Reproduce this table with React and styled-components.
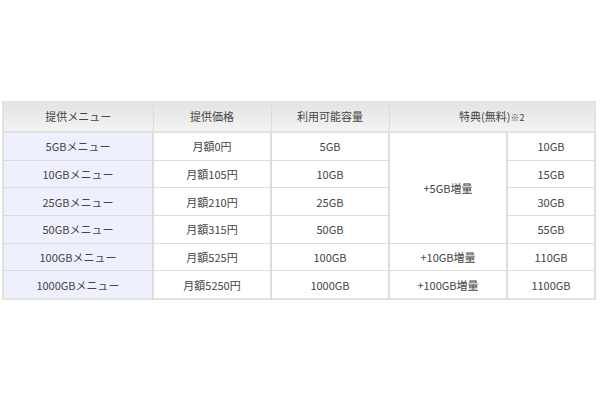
import React from "react";
import styled, { createGlobalStyle } from "styled-components";

const Global = createGlobalStyle`
  html, body { margin: 0; padding: 0; background: #ffffff; }
  body { width: 600px; height: 400px; overflow: hidden; }
`;

const Page = styled.div`
  padding: 101px 0 0 2px;
`;

const Table = styled.table`
  width: 594px;
  border-collapse: collapse;
  table-layout: fixed;
  border: 2px solid #e2e2e2;
  font-family: "MS PGothic", "Noto Sans CJK JP", "Liberation Sans", sans-serif;
  font-size: 11px;
  color: #444444;
`;

const HeadCell = styled.th`
  height: 25px;
  padding: 0 0 3px;
  font-weight: normal;
  text-align: center;
  background: linear-gradient(#e4e4e4, #f3f3f3);
  border: 1px solid #dcdcdc;
  border-bottom: 2px solid #e2e2e2;
`;

const Cell = styled.td`
  height: 26.7px;
  padding: 0;
  text-align: center;
  vertical-align: middle;
  background: ${(p) => (p.$menu ? "#eef1fd" : "#ffffff")};
  border: 1px solid #dcdcdc;
  border-width: 1px 2px 1px 1px;
`;

const Note = styled.span`
  font-size: 9px;
`;

const rows = [
  { menu: "5GBメニュー", price: "月額0円", cap: "5GB", total: "10GB" },
  { menu: "10GBメニュー", price: "月額105円", cap: "10GB", total: "15GB" },
  { menu: "25GBメニュー", price: "月額210円", cap: "25GB", total: "30GB" },
  { menu: "50GBメニュー", price: "月額315円", cap: "50GB", total: "55GB" },
  { menu: "100GBメニュー", price: "月額525円", cap: "100GB", extra: "+10GB増量", total: "110GB" },
  { menu: "1000GBメニュー", price: "月額5250円", cap: "1000GB", extra: "+100GB増量", total: "1100GB" },
];

export default function App() {
  return (
    <Page>
      <Global />
      <Table>
        <colgroup>
          <col style={{ width: 150 }} />
          <col style={{ width: 118 }} />
          <col style={{ width: 118 }} />
          <col style={{ width: 118 }} />
          <col />
        </colgroup>
        <thead>
          <tr>
            <HeadCell>提供メニュー</HeadCell>
            <HeadCell>提供価格</HeadCell>
            <HeadCell>利用可能容量</HeadCell>
            <HeadCell colSpan={2}>
              特典(無料)<Note>※2</Note>
            </HeadCell>
          </tr>
        </thead>
        <tbody>
          {rows.map((r, i) => (
            <tr key={r.menu}>
              <Cell $menu>{r.menu}</Cell>
              <Cell>{r.price}</Cell>
              <Cell>{r.cap}</Cell>
              {i === 0 && <Cell rowSpan={4}>+5GB増量</Cell>}
              {i >= 4 && <Cell>{r.extra}</Cell>}
              <Cell>{r.total}</Cell>
            </tr>
          ))}
        </tbody>
      </Table>
    </Page>
  );
}
